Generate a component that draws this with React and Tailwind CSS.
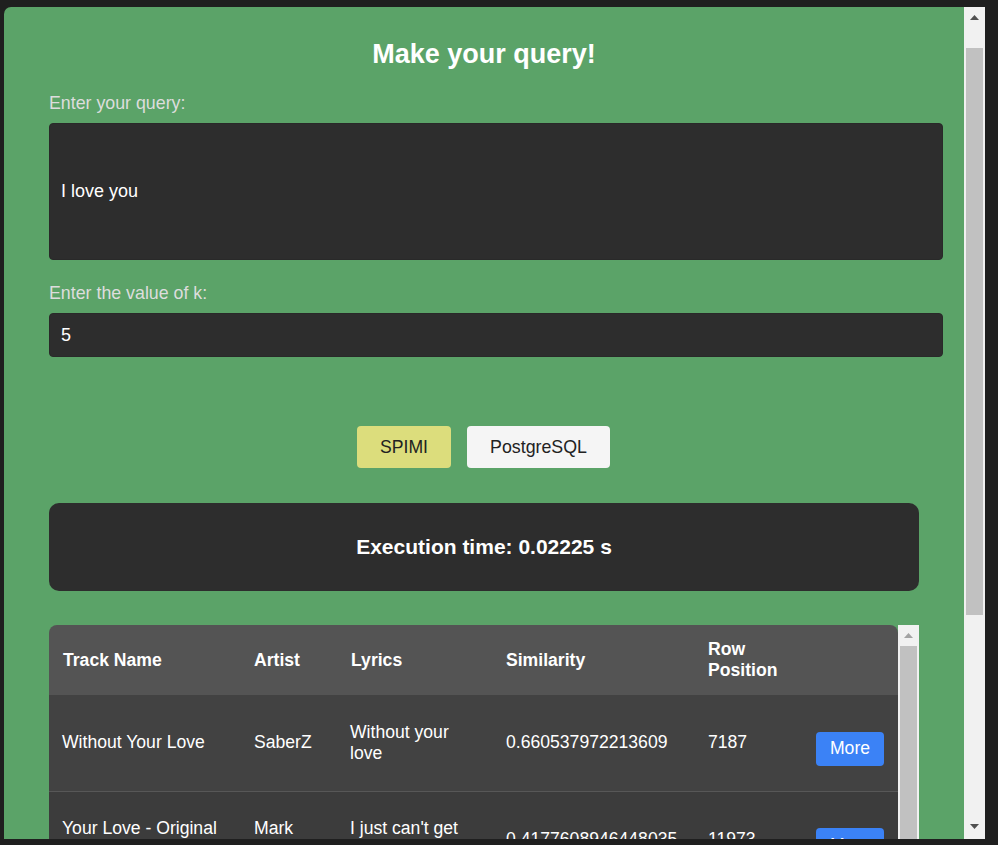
import React from "react";

function Tri({ up, color }) {
  return (
    <svg width="9" height="5" viewBox="0 0 9 5" className="block">
      {up ? (
        <polygon points="4.5,0 9,5 0,5" fill={color} />
      ) : (
        <polygon points="0,0 9,0 4.5,5" fill={color} />
      )}
    </svg>
  );
}

const rows = [
  { track: "Without Your Love", artist: "SaberZ", lyrics: "Without your love", sim: "0.660537972213609", pos: "7187" },
  { track: "Your Love - Original Mix", artist: "Mark Knight", lyrics: "I just can't get enough", sim: "0.4177608946448035", pos: "11973" },
  { track: "Love You", artist: "Free Nationals", lyrics: "I love you, yeah", sim: "0.3903211760245012", pos: "9822" },
  { track: "I Love You", artist: "Billie Eilish", lyrics: "It's not true", sim: "0.3511023318763311", pos: "2210" },
  { track: "Love Me", artist: "Lil Wayne", lyrics: "Love me, love me", sim: "0.3125587701294013", pos: "15034" },
];

export default function App() {
  return (
    <div className="w-[998px] h-[845px] overflow-hidden bg-[#1f1f1f] pt-[7px] pl-[4px] pr-[13px] pb-[6px] flex font-['Liberation_Sans',Arial,sans-serif]">
      <div className="w-[960px] h-[832px] overflow-hidden bg-[#5ba368] rounded-tl-[7px] px-[45px] pt-[32px]">
        <h1 className="text-[27px] leading-[31px] font-bold text-white text-center mb-[23px]">
          Make your query!
        </h1>

        <label className="block text-[17.8px] leading-[20px] text-[#dddddd] mb-[10px]">Enter your query:</label>
        <div className="w-[894px] h-[137px] bg-[#2d2d2d] rounded-[4px] border border-[#292929] flex items-center px-[11px] text-[18px] text-white mb-[23px]">
          I love you
        </div>

        <label className="block text-[17.8px] leading-[20px] text-[#dddddd] mb-[10px]">Enter the value of k:</label>
        <div className="w-[894px] h-[44px] bg-[#2d2d2d] rounded-[4px] border border-[#292929] flex items-center px-[11px] text-[18px] text-white">
          5
        </div>

        <div className="flex justify-center gap-[16px] mt-[69px] pr-[1px]">
          <button className="w-[94px] h-[42px] rounded-[4px] bg-[#dcdd7c] text-[#222222] text-[17.6px]">SPIMI</button>
          <button className="w-[143px] h-[42px] rounded-[4px] bg-[#f5f5f5] text-[#222222] text-[17.8px]">PostgreSQL</button>
        </div>

        <div className="mt-[35px] w-[870px] h-[88px] rounded-[10px] bg-[#2d2d2d] flex items-center justify-center text-white font-bold text-[21px]">
          Execution time: 0.02225 s
        </div>

        <div className="mt-[34px] w-[870px] flex">
          <div className="w-[849px] rounded-t-[8px] overflow-hidden">
            <table className="w-[849px] table-fixed border-collapse text-white text-[17.6px] leading-[21px]">
              <colgroup>
                <col className="w-[191px]" />
                <col className="w-[96px]" />
                <col className="w-[156px]" />
                <col className="w-[202px]" />
                <col className="w-[108px]" />
                <col className="w-[96px]" />
              </colgroup>
              <thead>
                <tr className="bg-[#545454]">
                  <th className="h-[70px] px-[14px] text-left font-bold">Track Name</th>
                  <th className="h-[70px] px-[14px] text-left font-bold">Artist</th>
                  <th className="h-[70px] px-[14px] pl-[15px] text-left font-bold">Lyrics</th>
                  <th className="h-[70px] px-[14px] text-left font-bold">Similarity</th>
                  <th className="h-[70px] px-[14px] text-left font-bold">Row Position</th>
                  <th className="h-[70px] px-[14px]"></th>
                </tr>
              </thead>
              <tbody>
                {rows.map((r, i) => (
                  <tr key={i} className={(i % 2 === 0 ? "bg-[#424242]" : "bg-[#3c3c3c]") + " border-b border-[#575757]"}>
                    <td className="h-[96px] px-[13px] align-middle">{r.track}</td>
                    <td className="h-[96px] px-[14px] align-middle">{r.artist}</td>
                    <td className="h-[96px] px-[14px] align-middle">{r.lyrics}</td>
                    <td className="h-[96px] px-[14px] align-middle">{r.sim}</td>
                    <td className="h-[96px] px-[14px] align-middle">{r.pos}</td>
                    <td className="h-[96px] px-[14px] align-middle">
                      <button className="block mt-[12px] w-[68px] h-[34px] rounded-[4px] bg-[#3b82f6] text-white text-[17.6px]">More</button>
                    </td>
                  </tr>
                ))}
              </tbody>
            </table>
          </div>
          <div className="w-[21px] bg-[#f1f1f1] flex flex-col items-center pt-[8px]">
            <Tri up color="#a3a3a3" />
            <div className="mt-[8px] w-[17px] h-[400px] bg-[#c1c1c1]" />
          </div>
        </div>
      </div>

      <div className="w-[21px] h-[832px] bg-[#f1f1f1] flex flex-col items-center pt-[8px] pb-[10px]">
        <Tri up color="#505050" />
        <div className="mt-[28px] w-[17px] h-[567px] bg-[#c1c1c1]" />
        <div className="mt-auto">
          <Tri color="#505050" />
        </div>
      </div>
    </div>
  );
}
